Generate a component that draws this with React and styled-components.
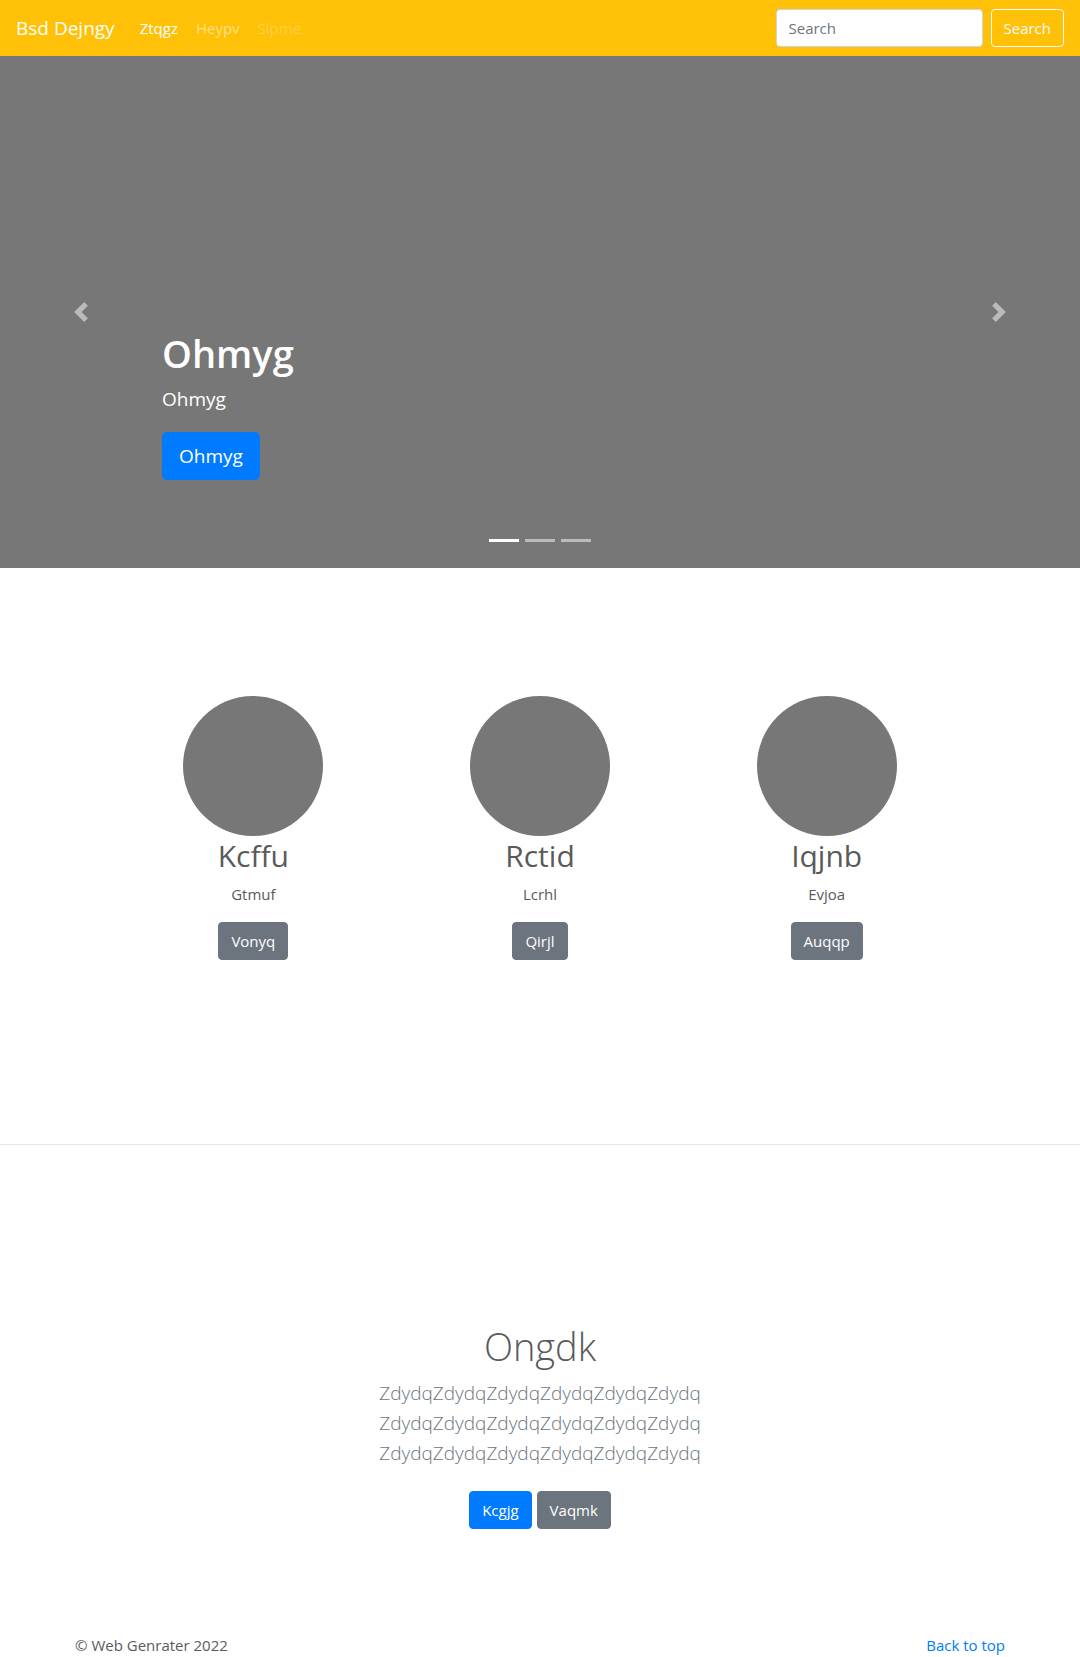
import React from 'react';
import styled, { createGlobalStyle } from 'styled-components';

const GlobalStyle = createGlobalStyle`
  *, *::before, *::after { box-sizing: border-box; }
  body {
    margin: 0;
    background: #fff;
    color: #5a5a5a;
    font-family: "Open Sans", "Noto Sans", sans-serif;
    font-size: 15px;
    line-height: 24px;
  }
  h1, h2, p { margin: 0; }
`;

const Navbar = styled.header`
  display: flex;
  align-items: center;
  height: 56px;
  padding: 0 16px;
  background: #ffc107;
`;

const Brand = styled.a`
  margin-right: 17px;
  color: #fff;
  font-size: 19px;
  line-height: 30px;
  text-decoration: none;
`;

const Nav = styled.nav`
  display: flex;
  flex: 1;
  gap: 2px;
`;

const NavLink = styled.a`
  padding: 8px;
  color: ${({ $tone }) =>
    ({ active: '#fff', disabled: 'rgba(255, 255, 255, 0.25)' })[$tone] ||
    'rgba(255, 255, 255, 0.5)'};
  text-decoration: none;
`;

const SearchForm = styled.form`
  display: flex;
  gap: 8px;
`;

const SearchInput = styled.input`
  width: 207px;
  height: 38px;
  padding: 6px 12px;
  border: 1px solid #ced4da;
  border-radius: 4px;
  background: #fff;
  color: #495057;
  font: inherit;
  &::placeholder { color: #6c757d; opacity: 1; }
`;

const variants = {
  primary: ['#007bff', '#007bff', '#fff'],
  secondary: ['#6c757d', '#6c757d', '#fff'],
  outline: ['transparent', '#f8f9fa', '#f8f9fa'],
};

const Button = styled.button`
  padding: ${({ $large }) => ($large ? '8px 16px' : '6px 12px')};
  border: 1px solid ${({ $variant }) => variants[$variant][1]};
  border-radius: ${({ $large }) => ($large ? '5px' : '4px')};
  background: ${({ $variant }) => variants[$variant][0]};
  color: ${({ $variant }) => variants[$variant][2]};
  font-family: inherit;
  font-size: ${({ $large }) => ($large ? '19px' : '15px')};
  line-height: ${({ $large }) => ($large ? '30px' : '24px')};
  cursor: pointer;
`;

const Carousel = styled.section`
  position: relative;
  display: grid;
  grid-template-columns: 15% 1fr 15%;
  height: 512px;
  background: #777;
  color: #fff;
`;

const CarouselControl = styled.button`
  display: flex;
  align-items: center;
  justify-content: center;
  padding: 0;
  border: 0;
  background: none;
  color: #fff;
  opacity: 0.5;
  cursor: pointer;
`;

const Caption = styled.div`
  display: flex;
  flex-direction: column;
  align-items: flex-start;
  justify-content: flex-end;
  padding-bottom: 88px;
`;

const CaptionTitle = styled.h1`
  margin-bottom: 7px;
  font-size: 38px;
  font-weight: 600;
  line-height: 48px;
`;

const CaptionText = styled.p`
  margin-bottom: 18px;
  font-size: 19px;
  line-height: 30px;
`;

const Indicators = styled.div`
  position: absolute;
  inset: auto 0 26px;
  display: flex;
  justify-content: center;
  gap: 6px;
`;

const Indicator = styled.button`
  width: 30px;
  height: 3px;
  padding: 0;
  border: 0;
  background: #fff;
  opacity: ${({ $active }) => ($active ? 1 : 0.5)};
`;

const Container = styled.div`
  max-width: 960px;
  margin: 0 auto;
`;

const Features = styled(Container)`
  display: grid;
  grid-template-columns: repeat(3, 1fr);
  padding: 128px 50px 184px;
`;

const Feature = styled.article`
  display: flex;
  flex-direction: column;
  align-items: center;
`;

const Avatar = styled.div`
  width: 140px;
  height: 140px;
  border-radius: 50%;
  background: #777;
`;

const FeatureTitle = styled.h2`
  margin-bottom: 6px;
  font-size: 30px;
  font-weight: 400;
  line-height: 40px;
`;

const FeatureText = styled.p`
  margin-bottom: 16px;
`;

const Divider = styled.hr`
  margin: 0;
  border: 0;
  border-top: 1px solid rgba(0, 0, 0, 0.1);
`;

const Callout = styled.section`
  display: flex;
  flex-direction: column;
  align-items: center;
  padding: 177px 16px 104px;
  text-align: center;
`;

const CalloutTitle = styled.h1`
  margin-bottom: 8px;
  font-size: 38px;
  font-weight: 300;
  line-height: 48px;
`;

const Lead = styled.p`
  margin-bottom: 23px;
  color: #6c757d;
  font-size: 19px;
  font-weight: 300;
  line-height: 30px;
`;

const Line = styled.span`
  display: block;
`;

const Actions = styled.div`
  display: flex;
  gap: 5px;
`;

const Footer = styled(Container).attrs({ as: 'footer' })`
  display: flex;
  justify-content: space-between;
  padding: 0 15px;
`;

const TopLink = styled.a`
  color: #007bff;
  text-decoration: none;
`;

const features = [
  { title: 'Kcffu', text: 'Gtmuf', action: 'Vonyq' },
  { title: 'Rctid', text: 'Lcrhl', action: 'Qirjl' },
  { title: 'Iqjnb', text: 'Evjoa', action: 'Auqqp' },
];

const leadLines = [0, 1, 2].map(() => 'Zdydq'.repeat(6));

function Chevron({ d }) {
  return (
    <svg width="20" height="20" viewBox="0 0 8 8" fill="currentColor" aria-hidden="true">
      <path d={d} />
    </svg>
  );
}

export default function App() {
  return (
    <>
      <GlobalStyle />
      <Navbar id="top">
        <Brand href="#top">Bsd Dejngy</Brand>
        <Nav>
          <NavLink href="#top" $tone="active">Ztqgz</NavLink>
          <NavLink href="#features">Heypv</NavLink>
          <NavLink href="#callout" $tone="disabled">Slpme</NavLink>
        </Nav>
        <SearchForm onSubmit={(e) => e.preventDefault()}>
          <SearchInput type="search" placeholder="Search" aria-label="Search" />
          <Button type="submit" $variant="outline">Search</Button>
        </SearchForm>
      </Navbar>
      <main>
        <Carousel>
          <CarouselControl type="button" aria-label="Previous">
            <Chevron d="M5.25 0l-4 4 4 4 1.5-1.5L4.25 4l2.5-2.5L5.25 0z" />
          </CarouselControl>
          <Caption>
            <CaptionTitle>Ohmyg</CaptionTitle>
            <CaptionText>Ohmyg</CaptionText>
            <Button type="button" $variant="primary" $large>Ohmyg</Button>
          </Caption>
          <CarouselControl type="button" aria-label="Next">
            <Chevron d="M2.75 0l-1.5 1.5L3.75 4l-2.5 2.5L2.75 8l4-4-4-4z" />
          </CarouselControl>
          <Indicators>
            {[0, 1, 2].map((i) => (
              <Indicator key={i} type="button" aria-label={`Slide ${i + 1}`} $active={i === 0} />
            ))}
          </Indicators>
        </Carousel>
        <Features id="features">
          {features.map(({ title, text, action }) => (
            <Feature key={title}>
              <Avatar />
              <FeatureTitle>{title}</FeatureTitle>
              <FeatureText>{text}</FeatureText>
              <Button type="button" $variant="secondary">{action}</Button>
            </Feature>
          ))}
        </Features>
        <Divider />
        <Callout id="callout">
          <CalloutTitle>Ongdk</CalloutTitle>
          <Lead>
            {leadLines.map((line, i) => (
              <Line key={i}>{line}</Line>
            ))}
          </Lead>
          <Actions>
            <Button type="button" $variant="primary">Kcgjg</Button>
            <Button type="button" $variant="secondary">Vaqmk</Button>
          </Actions>
        </Callout>
      </main>
      <Footer>
        <p>© Web Genrater 2022</p>
        <TopLink href="#top">Back to top</TopLink>
      </Footer>
    </>
  );
}
